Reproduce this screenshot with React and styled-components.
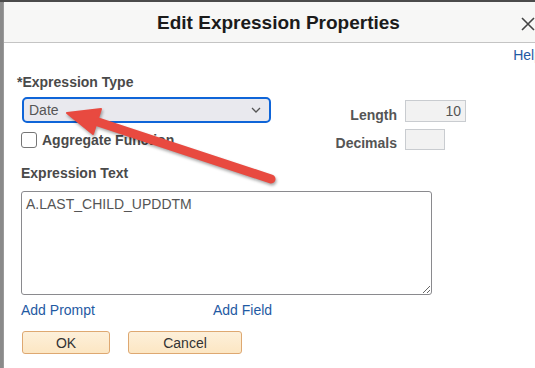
import styled, { createGlobalStyle } from 'styled-components';

const GlobalStyle = createGlobalStyle`
  html, body {
    margin: 0;
    padding: 0;
    overflow: hidden;
    background: #5b5b5b;
  }
  * {
    box-sizing: border-box;
  }
`;

const Page = styled.div`
  position: relative;
  width: 535px;
  height: 368px;
  overflow: hidden;
  padding: 2px 0 0 3px;
  background: linear-gradient(#4b4b4b 0 2px, #8a8a8a 2px);
  font-family: 'Liberation Sans', Arial, sans-serif;
`;

const Dialog = styled.div`
  width: 552px;
  height: 366px;
  background: #fff;
  border-left: 1px solid #9a9a9a;
  border-top-left-radius: 3px;
`;

const Header = styled.div`
  position: relative;
  height: 41px;
  background: #f7f7f6;
  border-bottom: 1px solid #c4c4c4;
  display: flex;
  align-items: center;
  justify-content: center;
  padding: 2px 2px 0 0;
`;

const Title = styled.h1`
  margin: 0;
  font-size: 19px;
  font-weight: 700;
  color: #1b1b1b;
`;

const Close = styled.button`
  position: absolute;
  right: 20px;
  top: 15px;
  width: 14px;
  height: 14px;
  padding: 0;
  border: 0;
  background: none;
  display: flex;
`;

const Body = styled.div`
  padding: 0 13px 0 17px;
`;

const HelpRow = styled.div`
  margin-top: 4px;
  text-align: right;
  line-height: 16px;
`;

const Link = styled.a`
  font-size: 14px;
  color: #1f5aa3;
  text-decoration: none;
`;

const Top = styled.div`
  display: flex;
  margin-top: 11px;
`;

const LeftCol = styled.div`
  width: 309px;
`;

const Label = styled.div`
  font-size: 14px;
  font-weight: 700;
  line-height: 16px;
  color: #4a4a4a;
  margin-left: ${p => p.$indent || 0}px;
  margin-top: ${p => p.$top || 0}px;
`;

const SelectBox = styled.div`
  margin-top: 7px;
  margin-left: 1px;
  width: 249px;
  height: 26px;
  border: 2px solid #0f65d8;
  border-radius: 5px;
  background: #e9e9ee;
  display: flex;
  align-items: center;
  justify-content: space-between;
  padding: 0 8px 0 5px;
  font-size: 14px;
  color: #555;
`;

const CheckRow = styled.div`
  margin-top: 9px;
  display: flex;
  align-items: center;
  gap: 5px;
`;

const CheckBox = styled.span`
  width: 16px;
  height: 16px;
  border: 1px solid #767676;
  border-radius: 3px;
  background: #fff;
`;

const RightCol = styled.div`
  margin-top: 26px;
  display: grid;
  grid-template-columns: 67px auto;
  column-gap: 8px;
  row-gap: 7px;
  align-items: end;
  align-content: start;
`;

const SideLabel = styled.div`
  font-size: 14px;
  font-weight: 700;
  line-height: 14px;
  color: #555;
  text-align: right;
`;

const NumField = styled.div`
  width: ${p => p.$w}px;
  height: ${p => p.$h}px;
  background: #f2f2f2;
  border: 1px solid #c9ccd0;
  font-size: 14px;
  color: #555;
  text-align: right;
  padding-right: 4px;
  line-height: 20px;
`;

const TextArea = styled.textarea`
  display: block;
  margin-top: 10px;
  width: 411px;
  height: 104px;
  border: 1px solid #8a8a8e;
  border-radius: 3px;
  padding: 4px 4px;
  font-family: 'Liberation Sans', Arial, sans-serif;
  font-size: 14px;
  color: #555;
  resize: both;
  outline: none;
`;

const LinkRow = styled.div`
  margin-top: 7px;
  display: grid;
  grid-template-columns: 192px auto;
  line-height: 16px;
`;

const Buttons = styled.div`
  margin-top: 13px;
  margin-left: 1px;
  display: flex;
  gap: 18px;
`;

const Button = styled.button`
  width: ${p => p.$w}px;
  height: 23px;
  border: 1px solid #dea871;
  border-radius: 3px;
  background: linear-gradient(#fdf0da, #fce6c3);
  font-family: 'Liberation Sans', Arial, sans-serif;
  font-size: 14px;
  color: #333;
  padding: 0;
`;

const Annotation = styled.svg`
  position: absolute;
  left: 0;
  top: 0;
  pointer-events: none;
  filter: drop-shadow(1px 2px 1.5px rgba(0, 0, 0, 0.35));
`;

const App = () => (
  <>
    <GlobalStyle />
    <Page>
      <Dialog>
        <Header>
          <Title>Edit Expression Properties</Title>
          <Close aria-label="Close">
            <svg width="14" height="14" viewBox="0 0 14 14">
              <path d="M1 1 L13 13 M13 1 L1 13" stroke="#444" strokeWidth="1.6" />
            </svg>
          </Close>
        </Header>
        <Body>
          <HelpRow>
            <Link href="#">Help</Link>
          </HelpRow>
          <Top>
            <LeftCol>
              <Label $indent={-4}>*Expression Type</Label>
              <SelectBox>
                <span>Date</span>
                <svg width="10" height="6" viewBox="0 0 10 6">
                  <path d="M1 1 L5 5 L9 1" fill="none" stroke="#555" strokeWidth="1.3" />
                </svg>
              </SelectBox>
              <CheckRow>
                <CheckBox />
                <Label>Aggregate Function</Label>
              </CheckRow>
            </LeftCol>
            <RightCol>
              <SideLabel>Length</SideLabel>
              <NumField $w={61} $h={22}>10</NumField>
              <SideLabel>Decimals</SideLabel>
              <NumField $w={40} $h={21} />
            </RightCol>
          </Top>
          <Label $top={15}>Expression Text</Label>
          <TextArea defaultValue="A.LAST_CHILD_UPDDTM" readOnly />
          <LinkRow>
            <Link href="#">Add Prompt</Link>
            <Link href="#">Add Field</Link>
          </LinkRow>
          <Buttons>
            <Button $w={88}>OK</Button>
            <Button $w={114}>Cancel</Button>
          </Buttons>
        </Body>
      </Dialog>
      <Annotation width="535" height="368" viewBox="0 0 535 368">
        <line x1="95" y1="121" x2="271" y2="179" stroke="#e84a40" strokeWidth="9" strokeLinecap="round" />
        <polygon points="67,113 101,109 93,134" fill="#e84a40" stroke="#e84a40" strokeWidth="2" strokeLinejoin="round" />
      </Annotation>
    </Page>
  </>
);

export default App;
